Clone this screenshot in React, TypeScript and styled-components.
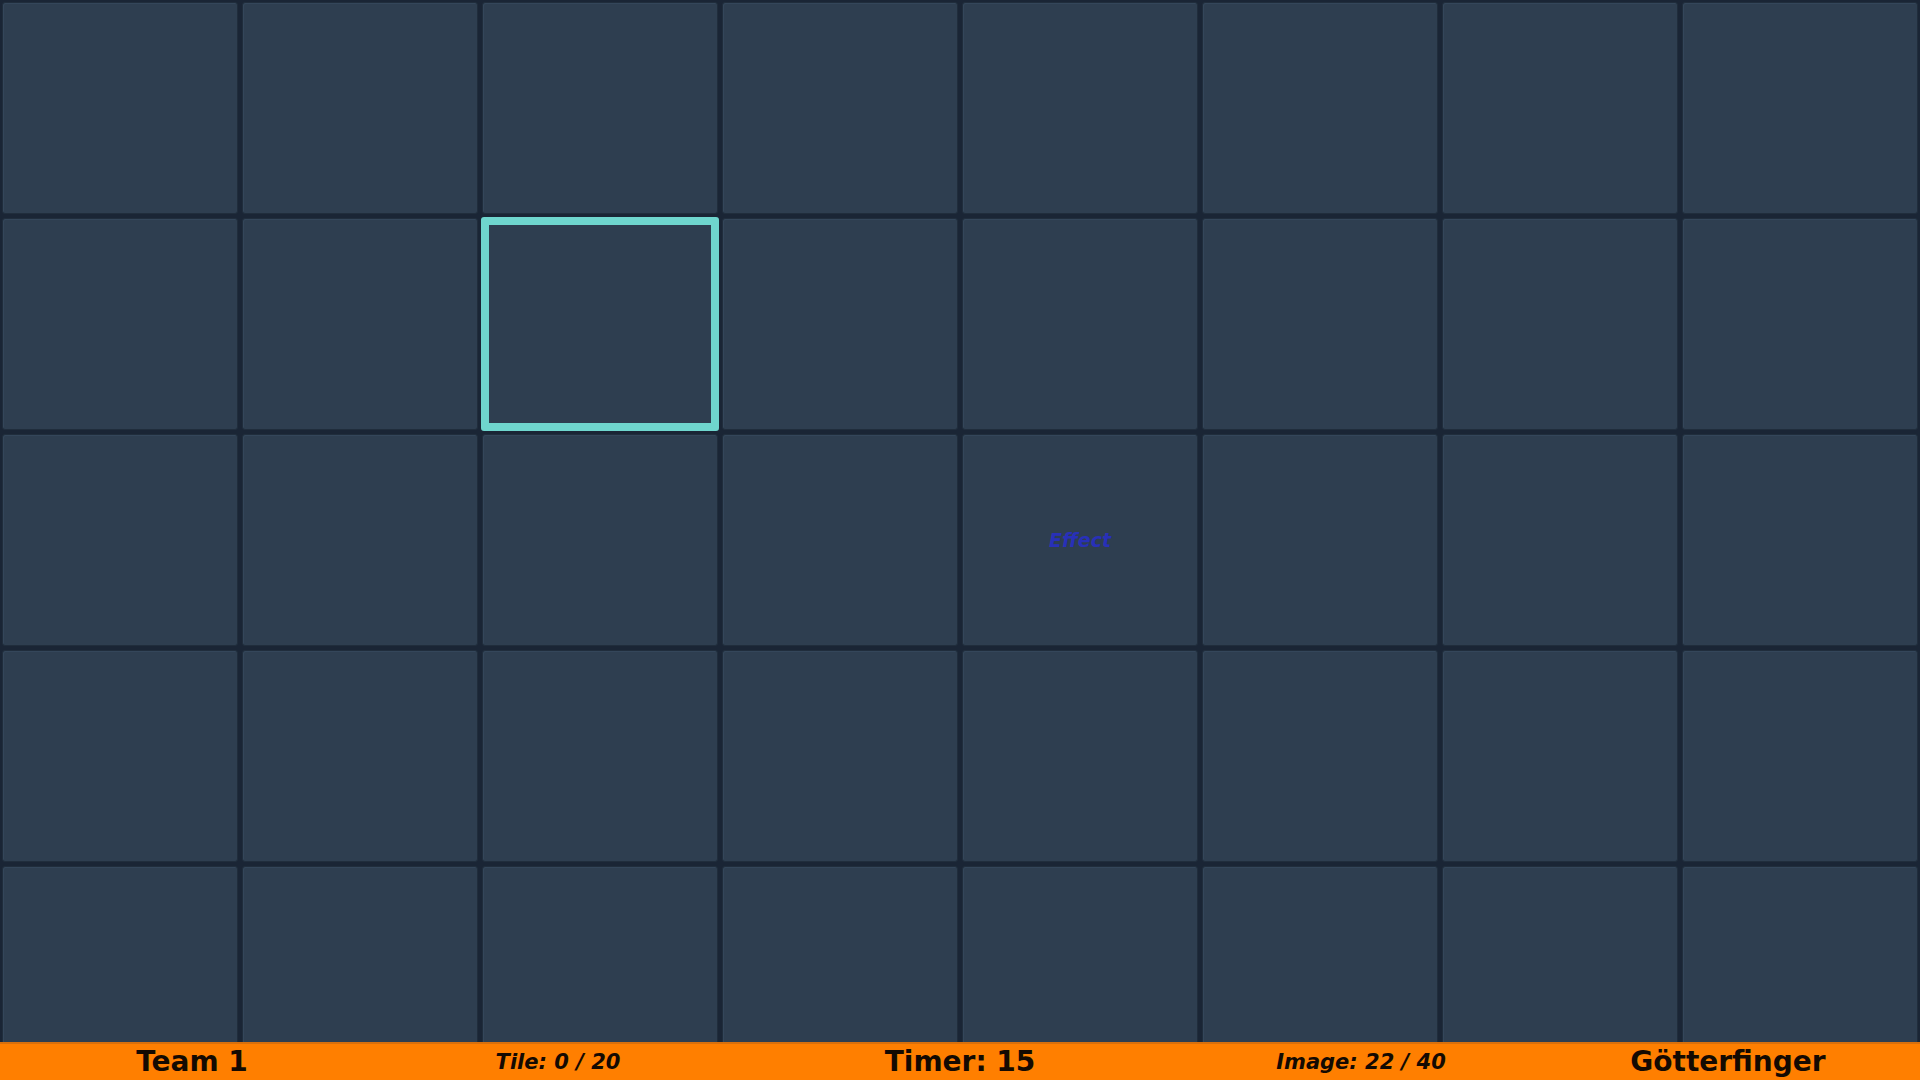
import styled, { createGlobalStyle } from "styled-components";

const COLS = 8;
const ROWS = 5;
const SELECTED = { row: 1, col: 2 };
const EFFECT = { row: 2, col: 4 };

const GlobalStyle = createGlobalStyle`
  html, body {
    margin: 0;
    padding: 0;
    width: 100%;
    height: 100%;
    overflow: hidden;
    background: #1a2535;
    font-family: "DejaVu Sans", Verdana, sans-serif;
  }
`;

const Board = styled.main`
  display: grid;
  grid-template-columns: repeat(${COLS}, 1fr);
  grid-auto-rows: 216px;
  width: 100vw;
  height: 100vh;
  background: #1a2535;
`;

const Tile = styled.div<{ $selected?: boolean }>`
  box-sizing: border-box;
  margin: ${({ $selected }) => ($selected ? "1px" : "2px")};
  display: flex;
  align-items: center;
  justify-content: center;
  border-radius: 3px;
  background: #2e3e50;
  border: ${({ $selected }) => ($selected ? "8px solid #6fd6ce" : "1px solid #202d3c")};
  box-shadow: ${({ $selected }) => ($selected ? "none" : "inset 1px 1px 0 #34465a")};
`;

const EffectLabel = styled.span`
  color: #2830b8;
  font-size: 19px;
  font-weight: bold;
  font-style: italic;
`;

const StatusBar = styled.footer`
  position: fixed;
  left: 0;
  right: 0;
  bottom: 0;
  height: 38px;
  box-sizing: border-box;
  border-top: 2px solid #d9700c;
  background: #ff7f00;
  display: grid;
  grid-template-columns: repeat(5, 1fr);
  align-items: center;
  color: #140a02;
`;

const Stat = styled.div<{ $small?: boolean; $shift?: number }>`
  text-align: center;
  font-weight: bold;
  font-size: ${({ $small }) => ($small ? "21px" : "28px")};
  font-style: ${({ $small }) => ($small ? "italic" : "normal")};
  line-height: 36px;
  white-space: pre;
  transform: translateX(${({ $shift = 0 }) => $shift}px);
`;

export default function App() {
  const tiles = [];
  for (let r = 0; r < ROWS; r++) {
    for (let c = 0; c < COLS; c++) {
      const selected = r === SELECTED.row && c === SELECTED.col;
      const effect = r === EFFECT.row && c === EFFECT.col;
      tiles.push(
        <Tile key={`${r}-${c}`} $selected={selected}>
          {effect && <EffectLabel>Effect</EffectLabel>}
        </Tile>
      );
    }
  }

  return (
    <>
      <GlobalStyle />
      <Board>{tiles}</Board>
      <StatusBar>
        <Stat>Team 1</Stat>
        <Stat $small $shift={-18}>Tile: 0 / 20</Stat>
        <Stat>Timer: 15</Stat>
        <Stat $small $shift={17}>Image: 22 / 40</Stat>
        <Stat>Götterfinger</Stat>
      </StatusBar>
    </>
  );
}
